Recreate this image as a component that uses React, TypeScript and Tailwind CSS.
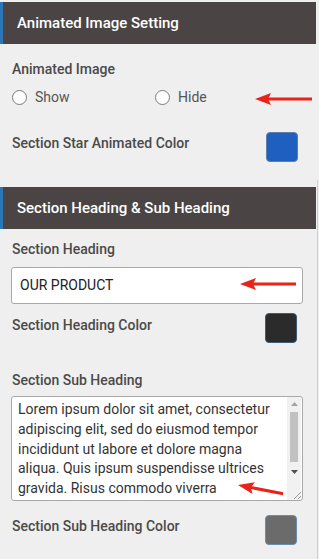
import React from "react";

function Arrow({ x, y, w, angle = 0 }: { x: number; y: number; w: number; angle?: number }) {
  return (
    <svg
      className="absolute"
      style={{ left: x, top: y - 7, transform: `rotate(${angle}deg)`, transformOrigin: "0 7px" }}
      width={w}
      height={14}
      viewBox={`0 0 ${w} 14`}
    >
      <line x1={12} y1={7} x2={w} y2={7} stroke="#e8231a" strokeWidth={3} />
      <polygon points={`0,7 16,1 13,7 16,13`} fill="#e8231a" />
    </svg>
  );
}

function Radio({ label }: { label: string }) {
  return (
    <div className="flex items-center gap-[8px]">
      <span className="w-[15px] h-[15px] rounded-full border border-[#7a7a7a] bg-white" />
      <span className="text-[14px] text-[#555]">{label}</span>
    </div>
  );
}

function Header({ title }: { title: string }) {
  return (
    <div className="h-[42px] w-[316px] bg-[#4a4544] border-l-[3px] border-[#2b76b8] pl-[14px] flex items-center text-white text-[15px] font-medium">
      {title}
    </div>
  );
}

function Label({ children, className = "" }: { children: React.ReactNode; className?: string }) {
  return <div className={`h-[20px] leading-[20px] text-[14px] font-medium text-[#4a4a4a] ${className}`}>{children}</div>;
}

export default function App() {
  const lines = [
    "Lorem ipsum dolor sit amet, consectetur",
    "adipiscing elit, sed do eiusmod tempor",
    "incididunt ut labore et dolore magna",
    "aliqua. Quis ipsum suspendisse ultrices",
    "gravida. Risus commodo viverra",
  ];
  return (
    <div
      className="relative w-[319px] h-[559px] bg-[#efefef] overflow-hidden"
      style={{ fontFamily: "Roboto, 'Liberation Sans', sans-serif" }}
    >
      <div className="pt-[2px]">
        <Header title="Animated Image Setting" />
      </div>
      <div className="pl-[12px] pr-[21px]">
        <Label className="mt-[15px]">Animated Image</Label>
        <div className="mt-[8px] h-[20px] flex items-center">
          <div className="w-[143px]">
            <Radio label="Show" />
          </div>
          <Radio label="Hide" />
        </div>
        <div className="mt-[25px] flex justify-between items-start">
          <Label className="mt-[1px]">Section Star Animated Color</Label>
          <div className="w-[32px] h-[30px] rounded-[4px] border border-[#5b7fa6] bg-[#1f5fbf]" />
        </div>
      </div>

      <div className="mt-[18px] w-[318px] border-r border-[#cfcfcf] pt-[7px] pb-[40px]">
        <Header title="Section Heading & Sub Heading" />
        <div className="pl-[12px] pr-[20px]">
          <Label className="mt-[10px]">Section Heading</Label>
        </div>
        <div className="mt-[8px] ml-[11px] w-[292px] h-[37px] bg-white border border-[#a9a9a9] rounded-[3px] pl-[8px] flex items-center text-[14px] text-[#222]">
          OUR PRODUCT
        </div>
        <div className="mt-[9px] pl-[12px] pr-[20px] flex justify-between items-start">
          <Label className="mt-[2px]">Section Heading Color</Label>
          <div className="w-[32px] h-[30px] rounded-[4px] border border-[#3e5c78] bg-[#2b2b2b]" />
        </div>
        <div className="pl-[12px]">
          <Label className="mt-[27px]">Section Sub Heading</Label>
        </div>
        <div className="relative mt-[6px] ml-[11px] w-[292px] h-[105px] bg-white border border-[#a9a9a9] rounded-[3px] flex overflow-hidden">
          <div className="flex-1 pl-[6px] pt-[3px] text-[14px] leading-[19.75px] text-[#333] overflow-hidden">
            {lines.map((l) => (
              <div key={l} className="whitespace-nowrap">
                {l}
              </div>
            ))}
          </div>
          <div className="w-[14px] mr-[1px] flex flex-col items-center bg-[#f1f1f1]">
            <div className="h-[14px] flex items-center justify-center">
              <svg width="7" height="4" viewBox="0 0 7 4">
                <polygon points="0,4 3.5,0 7,4" fill="#a3a3a3" />
              </svg>
            </div>
            <div className="w-[8px] h-[50px] bg-[#c1c1c1] mt-[1px]" />
            <div className="h-[14px] mt-[3px] flex items-center justify-center">
              <svg width="7" height="4" viewBox="0 0 7 4">
                <polygon points="0,0 3.5,4 7,0" fill="#505050" />
              </svg>
            </div>
            <div className="flex-1" />
          </div>
          <svg className="absolute right-[1px] bottom-[1px]" width="9" height="9" viewBox="0 0 9 9">
            <line x1="2" y1="9" x2="9" y2="2" stroke="#999" strokeWidth="1" />
            <line x1="6" y1="9" x2="9" y2="6" stroke="#999" strokeWidth="1" />
          </svg>
        </div>
        <div className="mt-[14px] pl-[12px] pr-[20px] flex justify-between items-start">
          <Label className="mt-[1px]">Section Sub Heading Color</Label>
          <div className="w-[32px] h-[30px] rounded-[4px] border border-[#6a8cb0] bg-[#6b6b6c]" />
        </div>
      </div>

      <Arrow x={255} y={99} w={57} />
      <Arrow x={240} y={284} w={56} />
      <Arrow x={238} y={485} w={46} angle={11} />
    </div>
  );
}
